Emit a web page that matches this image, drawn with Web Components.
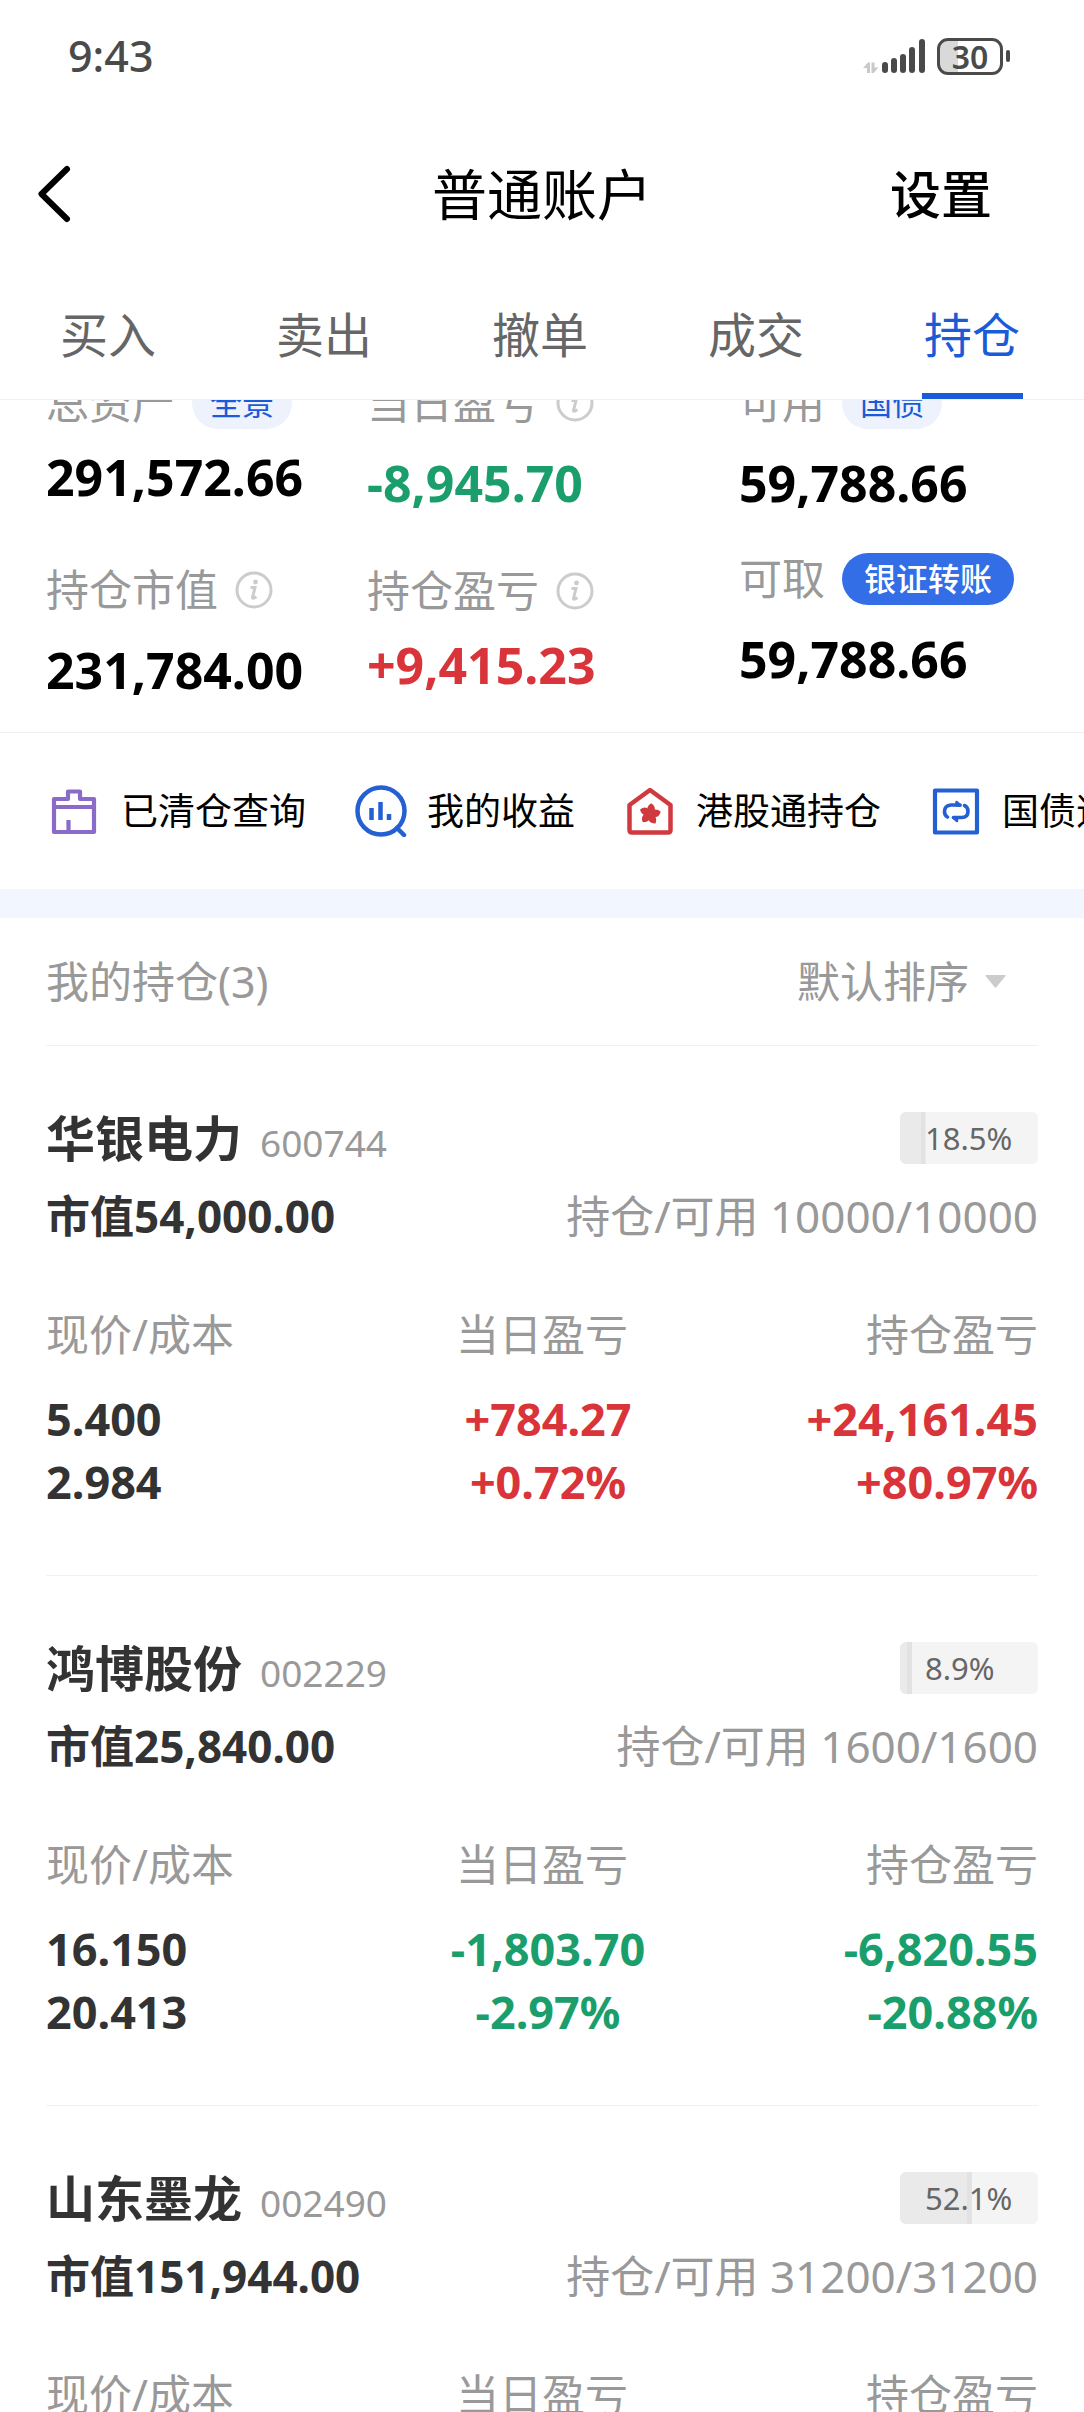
<!DOCTYPE html>
<html lang="zh-CN">
<head>
<meta charset="utf-8">
<meta name="viewport" content="width=device-width, initial-scale=1">
<title>普通账户</title>
<style>
  body {
    margin: 0;
    background: #fff;
    color: #000;
    font-family: "Noto Sans", "Noto Sans CJK SC", sans-serif;
    --blue: #1b5bd7;
    --muted: #999;
    --ink: #333;
    --line: #f0f0f0;
    --up: #d93439;
    --down: #1a9e6c;
    --side: 46px;
  }
</style>
</head>
<body>
<account-page>
  <status-bar slot="top" time="9:43" battery="30"></status-bar>
  <page-header slot="top" action="设置">普通账户</page-header>
  <trade-tabs slot="top" items="买入,卖出,撤单,成交,持仓" active="持仓"></trade-tabs>

  <account-summary>
    <stat-item slot="first" label="总资产" tag="全景" value="291,572.66" snug></stat-item>
    <stat-item slot="first" label="持仓市值" info value="231,784.00"></stat-item>
    <stat-item slot="second" label="当日盈亏" info value="-8,945.70"></stat-item>
    <stat-item slot="second" label="持仓盈亏" info value="+9,415.23" snug></stat-item>
    <stat-item slot="third" label="可用" tag="国债" value="59,788.66"></stat-item>
    <stat-item slot="third" label="可取" tag="银证转账" solid value="59,788.66"></stat-item>
  </account-summary>

  <quick-links>
    <quick-link icon="box">已清仓查询</quick-link>
    <quick-link icon="chart">我的收益</quick-link>
    <quick-link icon="hk">港股通持仓</quick-link>
    <quick-link icon="swap">国债逆回购</quick-link>
  </quick-links>

  <position-list count="3">
    <position-card name="华银电力" code="600744" ratio="18.5" market="54,000.00" shares="10000/10000"
      price="5.400" cost="2.984" day="+784.27" day-rate="+0.72%" total="+24,161.45" total-rate="+80.97%"></position-card>
    <position-card name="鸿博股份" code="002229" ratio="8.9" market="25,840.00" shares="1600/1600"
      price="16.150" cost="20.413" day="-1,803.70" day-rate="-2.97%" total="-6,820.55" total-rate="-20.88%"></position-card>
    <position-card name="山东墨龙" code="002490" ratio="52.1" market="151,944.00" shares="31200/31200"></position-card>
  </position-list>
</account-page>

<script>
const trend = (value) => value.startsWith("+") ? "up" : value.startsWith("-") ? "down" : "";

class AccountPage extends HTMLElement {
  connectedCallback() {
    this.attachShadow({ mode: "open" });
    this.shadowRoot.innerHTML = `
      <style>
        :host {
          display: flex;
          flex-direction: column;
          height: 100vh;
          overflow: hidden;
        }
        main {
          flex: 1;
          min-height: 0;
          overflow: hidden;
        }
      </style>
      <slot name="top"></slot>
      <main><slot></slot></main>
    `;
  }
}

class StatusBar extends HTMLElement {
  connectedCallback() {
    this.attachShadow({ mode: "open" });
    this.shadowRoot.innerHTML = `
      <style>
        :host {
          display: flex;
          justify-content: space-between;
          align-items: center;
          height: 112px;
          padding: 0 74px 0 68px;
          box-sizing: border-box;
          flex: none;
          color: #4a4a4a;
        }
        time {
          font-size: 43px;
          line-height: 60px;
          font-weight: 500;
        }
        .icons {
          display: flex;
          align-items: center;
          gap: 12px;
        }
        .battery {
          display: flex;
          align-items: center;
          gap: 3px;
        }
        .cell {
          display: grid;
          place-items: center;
          width: 60px;
          height: 31px;
          border: 3px solid #4a4a4a;
          border-radius: 11px;
          background: linear-gradient(90deg, #d9d9d9 30%, #fff 30%);
          font-size: 32px;
          line-height: 31px;
          font-weight: 600;
        }
        .nub {
          width: 4px;
          height: 12px;
          border-radius: 2px;
          background: #4a4a4a;
        }
      </style>
      <time>${this.getAttribute("time")}</time>
      <div class="icons">
        <svg width="62" height="36" viewBox="0 0 62 36" fill="#4a4a4a" aria-hidden="true">
          <path d="M0 30 5 24.500h2V35H4v-5zM8.500 24.500h3v5h4L10.500 35h-2z" fill="#c9c9c9"/>
          <rect x="19" y="24" width="6" height="11" rx="3"/>
          <rect x="28" y="20" width="6" height="15" rx="3"/>
          <rect x="37" y="16" width="6" height="19" rx="3"/>
          <rect x="46" y="9" width="6" height="26" rx="3"/>
          <rect x="56" y="1" width="6" height="34" rx="3"/>
        </svg>
        <div class="battery">
          <div class="cell">${this.getAttribute("battery")}</div>
          <div class="nub"></div>
        </div>
      </div>
    `;
  }
}

class PageHeader extends HTMLElement {
  connectedCallback() {
    this.attachShadow({ mode: "open" });
    this.shadowRoot.innerHTML = `
      <style>
        :host {
          display: grid;
          grid-template-columns: 1fr auto 1fr;
          align-items: center;
          height: 164px;
          padding: 0 92px 0 34px;
          box-sizing: border-box;
          flex: none;
        }
        button {
          border: 0;
          padding: 0;
          background: none;
          color: inherit;
          font: inherit;
          font-size: 51px;
          font-weight: 500;
          line-height: 72px;
        }
        .back {
          justify-self: start;
          display: flex;
        }
        .action {
          justify-self: end;
        }
        h1 {
          margin: 0;
          padding-left: 58px;
          font-size: 55px;
          line-height: 72px;
          font-weight: 400;
        }
      </style>
      <button class="back" aria-label="返回">
        <svg width="40" height="60" viewBox="0 0 40 60" fill="none" stroke="#000" stroke-width="6" stroke-linecap="round" stroke-linejoin="round">
          <path d="M33 5 7.500 30 33 55"/>
        </svg>
      </button>
      <h1><slot></slot></h1>
      <button class="action">${this.getAttribute("action")}</button>
    `;
  }
}

class TradeTabs extends HTMLElement {
  connectedCallback() {
    const active = this.getAttribute("active");
    const tabs = this.getAttribute("items").split(",").map((item) =>
      `<a href="#${item}"${item === active ? ' aria-current="page"' : ""}>${item}</a>`).join("");
    this.attachShadow({ mode: "open" });
    this.shadowRoot.innerHTML = `
      <style>
        :host {
          display: block;
          flex: none;
          border-bottom: 1px solid var(--line);
        }
        nav {
          display: grid;
          grid-template-columns: repeat(5, 1fr);
          padding-right: 4px;
        }
        a {
          display: flex;
          flex-direction: column;
          align-items: center;
          color: #666;
          text-decoration: none;
          font-size: 48px;
          line-height: 117px;
        }
        a::after {
          content: "";
          width: 101px;
          height: 6px;
        }
        a[aria-current] {
          color: var(--blue);
        }
        a[aria-current]::after {
          background: var(--blue);
        }
      </style>
      <nav>${tabs}</nav>
    `;
  }
}

class AccountSummary extends HTMLElement {
  connectedCallback() {
    this.attachShadow({ mode: "open" });
    this.shadowRoot.innerHTML = `
      <style>
        :host {
          display: block;
          overflow: hidden;
          border-bottom: 1px solid var(--line);
        }
        /* scrolled a little way under the tab bar */
        .grid {
          display: grid;
          grid-template-columns: 321fr 372fr 299fr;
          margin-top: -23px;
          padding: 0 var(--side) 32px;
        }
        .col {
          display: flex;
          flex-direction: column;
          gap: 52px;
        }
        .loose { gap: 57px; }
        .tight { gap: 40px; }
      </style>
      <div class="grid">
        <div class="col loose"><slot name="first"></slot></div>
        <div class="col"><slot name="second"></slot></div>
        <div class="col tight"><slot name="third"></slot></div>
      </div>
    `;
  }
}

class StatItem extends HTMLElement {
  connectedCallback() {
    const value = this.getAttribute("value");
    const tag = this.getAttribute("tag");
    this.attachShadow({ mode: "open" });
    this.shadowRoot.innerHTML = `
      <style>
        :host {
          display: flex;
          flex-direction: column;
          gap: 24px;
        }
        :host([snug]) {
          gap: 18px;
        }
        .label {
          display: flex;
          align-items: center;
          gap: 17px;
          color: var(--muted);
          font-size: 43px;
          line-height: 52px;
          white-space: nowrap;
        }
        button {
          display: flex;
          border: 0;
          padding: 0;
          background: none;
          font: inherit;
        }
        .tag {
          padding: 0 18px;
          border-radius: 26px;
          background: #edf2fd;
          color: var(--blue);
          font-size: 32px;
          line-height: 52px;
        }
        :host([solid]) .tag {
          padding: 0 22px;
          background: #336ee6;
          color: #fff;
          font-weight: 500;
        }
        .value {
          font-size: 50px;
          line-height: 60px;
          font-weight: 700;
        }
        .up { color: var(--up); }
        .down { color: var(--down); }
      </style>
      <div class="label">
        <span>${this.getAttribute("label")}</span>
        ${tag ? `<button class="tag">${tag}</button>` : ""}
        ${this.hasAttribute("info") ? `
          <button aria-label="说明">
            <svg width="38" height="38" viewBox="0 0 38 38" fill="none" stroke="#ccc">
              <circle cx="19" cy="19" r="17" stroke-width="3"/>
              <circle cx="20.500" cy="11" r="2.400" fill="#ccc" stroke="none"/>
              <path d="M15.500 16.500h4.500L17.500 26.500q-.3 1.800 4-.7" stroke-width="3"/>
            </svg>
          </button>` : ""}
      </div>
      <div class="value ${trend(value)}">${value}</div>
    `;
  }
}

class QuickLinks extends HTMLElement {
  connectedCallback() {
    this.attachShadow({ mode: "open" });
    this.shadowRoot.innerHTML = `
      <style>
        :host {
          display: block;
          border-bottom: 29px solid #f2f6fe;
        }
        nav {
          display: flex;
          gap: 49px;
          padding: 48px 0 48px 49px;
          overflow: hidden;
        }
      </style>
      <nav><slot></slot></nav>
    `;
  }
}

const petal = `<path d="M0 0C-4.500-1.500-5.500-7-1.500-10.800 2.500-9.500 4.500-6.500 3-3.500Q1.800-1.800 0 0z"/>`;

const icons = {
  box: `<g stroke="#8a6bc9" stroke-width="4.200" stroke-linejoin="round">
      <path d="M19 14V6.500h12V14h14v33H5V14z"/>
      <path d="M5 22h40M19.500 47V35"/>
    </g>`,
  chart: `<g stroke="#2560d3" stroke-width="4.500">
      <ellipse cx="26" cy="26" rx="23.500" ry="23.500"/>
      <path d="M42 43l7 7" stroke-linecap="round"/>
      <path d="M16.500 23v12M25.500 17v18M34 29v6"/>
    </g>`,
  hk: `<path d="M26 5 46.500 20v25q0 2.500-2.500 2.500H8q-2.500 0-2.500-2.500V20z" stroke="#d0393e" stroke-width="4.500" stroke-linejoin="round"/>
    <g fill="#d0393e" transform="translate(26 29)">
      ${[14, 86, 158, 230, 302].map((a) => `<g transform="rotate(${a})">${petal}</g>`).join("")}
    </g>`,
  swap: `<g stroke="#2560d3" stroke-width="4.200" stroke-linejoin="round" stroke-linecap="round">
      <path d="M5 5.500h42v42H5z"/>
      <path d="M17.500 32q-3-1.500-3-5.500 0-6 6.500-6.500h9M34.500 20.500q3.500 1.500 3.500 6 0 6-6.500 6h-8" stroke-width="3.600"/>
      <path d="M26.500 17l4 3.500h-4zM27 36l-4-3.500h4z" fill="#2560d3" stroke-width="2.500"/>
    </g>`
};

class QuickLink extends HTMLElement {
  connectedCallback() {
    this.attachShadow({ mode: "open" });
    this.shadowRoot.innerHTML = `
      <style>
        :host {
          display: block;
          flex: none;
        }
        a {
          display: flex;
          align-items: center;
          gap: 20px;
          color: #000;
          text-decoration: none;
          font-size: 37px;
          line-height: 60px;
          white-space: nowrap;
        }
      </style>
      <a href="#">
        <svg width="52" height="52" viewBox="0 0 52 52" fill="none" aria-hidden="true">${icons[this.getAttribute("icon")]}</svg>
        <slot></slot>
      </a>
    `;
  }
}

class PositionList extends HTMLElement {
  connectedCallback() {
    this.attachShadow({ mode: "open" });
    this.shadowRoot.innerHTML = `
      <style>
        :host {
          display: block;
          padding: 0 var(--side);
        }
        header {
          display: flex;
          justify-content: space-between;
          align-items: center;
          height: 127px;
          border-bottom: 1px solid var(--line);
          color: var(--muted);
          font-size: 43px;
          line-height: 60px;
        }
        h2 {
          margin: 0;
          font: inherit;
        }
        label {
          display: flex;
          align-items: center;
          gap: 16px;
          padding-right: 32px;
        }
        select {
          appearance: none;
          border: 0;
          padding: 0;
          background: none;
          color: inherit;
          font: inherit;
        }
      </style>
      <header>
        <h2>我的持仓(${this.getAttribute("count")})</h2>
        <label>
          <select aria-label="排序方式"><option>默认排序</option></select>
          <svg width="21" height="13" viewBox="0 0 21 13" fill="#ccc" aria-hidden="true"><path d="M1 0h19q1 0 .5 1L11.500 12q-1 1-2 0L.5 1Q0 0 1 0z"/></svg>
        </label>
      </header>
      <slot></slot>
    `;
  }
}

class PositionCard extends HTMLElement {
  cell(name) {
    const value = this.getAttribute(name) || "";
    return `<td class="${trend(value)}">${value}</td>`;
  }

  connectedCallback() {
    const ratio = this.getAttribute("ratio");
    this.attachShadow({ mode: "open" });
    this.shadowRoot.innerHTML = `
      <style>
        :host {
          display: block;
          padding: 66px 0 62px;
          border-bottom: 1px solid var(--line);
          color: var(--ink);
          font-size: 43px;
          line-height: 60px;
        }
        .row {
          display: flex;
          justify-content: space-between;
          align-items: center;
          margin-bottom: 22px;
        }
        .title {
          display: flex;
          align-items: baseline;
          gap: 18px;
        }
        h3 {
          margin: 0;
          font-size: 49px;
          line-height: 52px;
          font-weight: 700;
        }
        .code {
          color: var(--muted);
          font-size: 37px;
          line-height: 40px;
        }
        .ratio {
          width: 138px;
          padding-left: 25px;
          box-sizing: border-box;
          border-radius: 6px;
          background:
            linear-gradient(90deg, #eaeaea calc(100% - 5px), #e2e2e2 calc(100% - 5px)) no-repeat 0 0 / ${ratio}% 100%,
            #f4f4f4;
          color: #666;
          font-size: 31px;
          line-height: 52px;
        }
        .market {
          font-size: 44px;
          font-weight: 700;
        }
        .shares {
          color: var(--muted);
          font-size: 44px;
        }
        table {
          width: 100%;
          margin-top: 59px;
          table-layout: fixed;
          border-collapse: collapse;
        }
        th, td {
          padding: 0;
          text-align: center;
        }
        th {
          padding-bottom: 22px;
          color: var(--muted);
          font-weight: 400;
        }
        td {
          font-size: 45px;
          line-height: 63px;
          font-weight: 700;
        }
        td:nth-child(2) {
          padding-left: 12px;
        }
        th:first-child, td:first-child { text-align: left; }
        th:last-child, td:last-child { text-align: right; }
        .up { color: var(--up); }
        .down { color: var(--down); }
      </style>
      <div class="row">
        <div class="title"><h3>${this.getAttribute("name")}</h3><span class="code">${this.getAttribute("code")}</span></div>
        <div class="ratio">${ratio}%</div>
      </div>
      <div class="row">
        <span class="market">市值${this.getAttribute("market")}</span>
        <span class="shares">持仓/可用 ${this.getAttribute("shares")}</span>
      </div>
      <table>
        <thead>
          <tr><th>现价/成本</th><th>当日盈亏</th><th>持仓盈亏</th></tr>
        </thead>
        <tbody>
          <tr>${this.cell("price")}${this.cell("day")}${this.cell("total")}</tr>
          <tr>${this.cell("cost")}${this.cell("day-rate")}${this.cell("total-rate")}</tr>
        </tbody>
      </table>
    `;
  }
}

customElements.define("account-page", AccountPage);
customElements.define("status-bar", StatusBar);
customElements.define("page-header", PageHeader);
customElements.define("trade-tabs", TradeTabs);
customElements.define("account-summary", AccountSummary);
customElements.define("stat-item", StatItem);
customElements.define("quick-links", QuickLinks);
customElements.define("quick-link", QuickLink);
customElements.define("position-list", PositionList);
customElements.define("position-card", PositionCard);
</script>
</body>
</html>
